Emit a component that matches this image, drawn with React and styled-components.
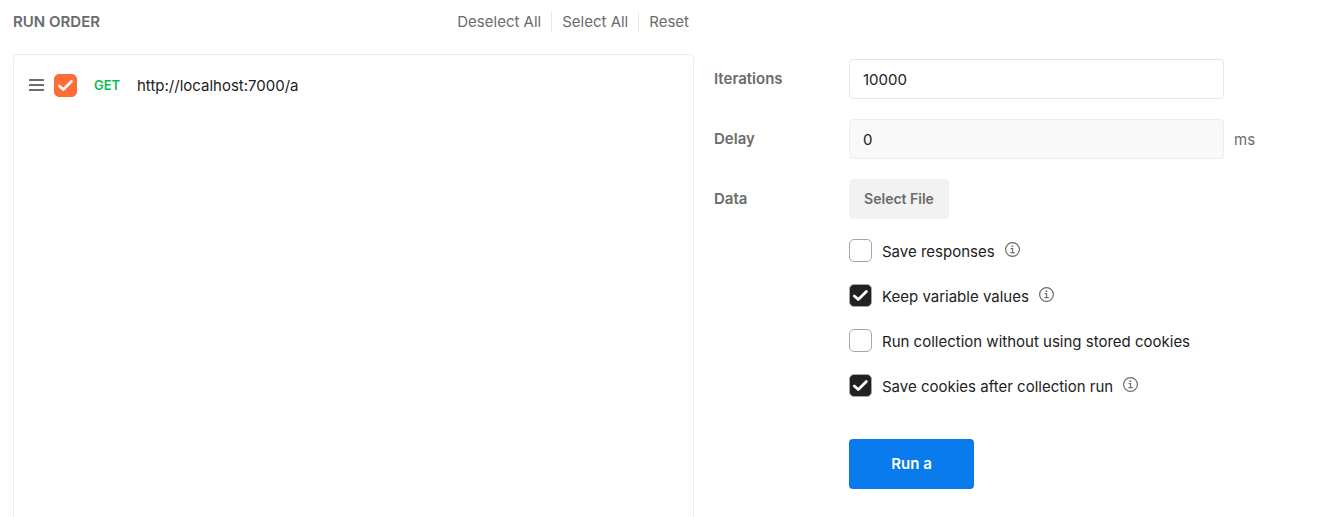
import React, { useState } from "react";
import styled, { createGlobalStyle } from "styled-components";

const GlobalStyle = createGlobalStyle`
  *, *::before, *::after { box-sizing: border-box; }
  body {
    margin: 0;
    background: #fff;
    color: #212121;
    font-family: Inter, "Liberation Sans", sans-serif;
    font-size: 15px;
    line-height: 20px;
  }
  button, input { font: inherit; }
`;

const Page = styled.main`
  display: grid;
  grid-template-columns: minmax(0, 681fr) minmax(0, 612fr);
  column-gap: 20px;
  min-height: 100vh;
  padding-left: 13px;
`;

const OrderColumn = styled.section`
  display: flex;
  flex-direction: column;
`;

const OrderHeader = styled.header`
  display: flex;
  align-items: center;
  justify-content: space-between;
  padding: 12px 5px 22px 0;
`;

const Title = styled.h2`
  margin: 0;
  color: #6b6b6b;
  font-size: 15px;
  font-weight: 600;
`;

const Actions = styled.div`
  display: flex;
`;

const ActionButton = styled.button`
  height: 20px;
  padding: 0 10px;
  border: 0;
  background: none;
  color: #6b6b6b;
  white-space: nowrap;
  cursor: pointer;

  & + & { border-left: 1px solid #e6e6e6; }
  &:last-child { padding-right: 0; }
`;

const RequestList = styled.ul`
  flex: 1;
  margin: 0;
  padding: 19px 15px;
  border: 1px solid #ededed;
  border-bottom: 0;
  border-radius: 4px 4px 0 0;
  list-style: none;
`;

const RequestRow = styled.li`
  display: flex;
  align-items: center;
`;

const DragIcon = styled.svg`
  width: 15px;
  height: 13px;
  margin-right: 10px;
  fill: #6b6b6b;
`;

const Method = styled.span`
  width: 43px;
  margin-left: 17px;
  padding-bottom: 2px;
  color: #0cbb52;
  font-size: 13px;
  font-weight: 600;
`;

const CheckWrap = styled.span`
  display: grid;
  flex: none;
  width: 23px;
  height: 23px;

  > * { grid-area: 1 / 1; }
`;

const CheckInput = styled.input`
  appearance: none;
  width: 23px;
  height: 23px;
  margin: 0;
  border: 1px solid #a6a6a6;
  border-radius: 5px;
  background: #fff;
  cursor: pointer;

  &:checked {
    border-color: ${(p) => (p.$accent ? "#ff6c37" : "#a6a6a6")};
    background: ${(p) => (p.$accent ? "#ff6c37" : "#212121")};
  }
  &:not(:checked) + svg { visibility: hidden; }
`;

const CheckMark = styled.svg`
  width: 23px;
  height: 23px;
  fill: none;
  stroke: #fff;
  stroke-width: 2.8;
  stroke-linecap: round;
  stroke-linejoin: round;
  pointer-events: none;
`;

const Settings = styled.form`
  padding-top: 59px;
`;

const Field = styled.div`
  display: flex;
  align-items: center;
  height: 40px;
  margin-bottom: 20px;
`;

const FieldLabel = styled.label`
  flex: none;
  width: 135px;
  color: #6b6b6b;
  font-weight: 600;
`;

const TextInput = styled.input`
  flex: 0 1 375px;
  min-width: 0;
  height: 40px;
  padding: 1px 13px 0;
  border: 1px solid ${(p) => (p.$muted ? "#ededed" : "#e6e6e6")};
  border-radius: 4px;
  background: ${(p) => (p.$muted ? "#f9f9f9" : "#fff")};
  color: #212121;
`;

const Unit = styled.span`
  margin-left: 10px;
  padding-top: 2px;
  color: #6b6b6b;
`;

const FileButton = styled.button`
  width: 100px;
  height: 40px;
  padding: 0;
  border: 0;
  border-radius: 4px;
  background: #f2f2f2;
  color: #6b6b6b;
  font-size: 14px;
  font-weight: 600;
  cursor: pointer;
`;

const Options = styled.div`
  display: flex;
  flex-direction: column;
  gap: 22px;
  padding-left: 135px;
`;

const Option = styled.div`
  display: flex;
  align-items: center;
  height: 23px;
`;

const OptionLabel = styled.label`
  display: flex;
  align-items: center;
  gap: 10px;
`;

const OptionText = styled.span`
  padding-top: 3px;
`;

const Info = styled.svg`
  width: 15px;
  height: 15px;
  margin: 0 0 2px 10px;
  fill: none;
  stroke: #6b6b6b;
`;

const RunButton = styled.button`
  width: 125px;
  height: 50px;
  margin: 42px 0 28px 135px;
  padding: 0;
  border: 0;
  border-radius: 4px;
  background: #097bed;
  color: #fff;
  font-weight: 600;
  cursor: pointer;
`;

function Checkbox({ accent, ...rest }) {
  return (
    <CheckWrap>
      <CheckInput type="checkbox" $accent={accent} {...rest} />
      <CheckMark viewBox="0 0 23 23" aria-hidden="true">
        <path d="M5.3 12 9.3 15.5 17.4 7.6" />
      </CheckMark>
    </CheckWrap>
  );
}

function InfoIcon() {
  return (
    <Info viewBox="0 0 15 15" aria-hidden="true">
      <circle cx="7.5" cy="7.5" r="6.9" strokeWidth="1.2" />
      <path d="M5.6 6.6H7.6V10.6M5.4 10.6H9.7" strokeWidth="1.1" />
      <circle cx="7.4" cy="4.2" r="0.9" fill="#6b6b6b" stroke="none" />
    </Info>
  );
}

const options = [
  { id: "responses", text: "Save responses", checked: false, info: true },
  { id: "variables", text: "Keep variable values", checked: true, info: true },
  { id: "no-cookies", text: "Run collection without using stored cookies", checked: false, info: false },
  { id: "save-cookies", text: "Save cookies after collection run", checked: true, info: true },
];

export default function App() {
  const [selected, setSelected] = useState(true);

  return (
    <>
      <GlobalStyle />
      <Page>
        <OrderColumn>
          <OrderHeader>
            <Title>RUN ORDER</Title>
            <Actions>
              <ActionButton type="button" onClick={() => setSelected(false)}>Deselect All</ActionButton>
              <ActionButton type="button" onClick={() => setSelected(true)}>Select All</ActionButton>
              <ActionButton type="button" onClick={() => setSelected(true)}>Reset</ActionButton>
            </Actions>
          </OrderHeader>
          <RequestList>
            <RequestRow>
              <DragIcon viewBox="0 0 15 13" aria-hidden="true">
                <rect width="15" height="2" rx="0.5" />
                <rect y="5" width="15" height="2" rx="0.5" />
                <rect y="10" width="15" height="2" rx="0.5" />
              </DragIcon>
              <Checkbox
                accent
                id="request-a"
                aria-labelledby="request-a-url"
                checked={selected}
                onChange={(e) => setSelected(e.target.checked)}
              />
              <Method>GET</Method>
              <label id="request-a-url" htmlFor="request-a">http://localhost:7000/a</label>
            </RequestRow>
          </RequestList>
        </OrderColumn>

        <Settings onSubmit={(e) => e.preventDefault()}>
          <Field>
            <FieldLabel htmlFor="iterations">Iterations</FieldLabel>
            <TextInput id="iterations" type="text" defaultValue="10000" />
          </Field>
          <Field>
            <FieldLabel htmlFor="delay">Delay</FieldLabel>
            <TextInput id="delay" type="text" defaultValue="0" $muted />
            <Unit>ms</Unit>
          </Field>
          <Field>
            <FieldLabel htmlFor="data">Data</FieldLabel>
            <FileButton id="data" type="button">Select File</FileButton>
          </Field>
          <Options>
            {options.map((o) => (
              <Option key={o.id}>
                <OptionLabel htmlFor={o.id}>
                  <Checkbox id={o.id} defaultChecked={o.checked} />
                  <OptionText>{o.text}</OptionText>
                </OptionLabel>
                {o.info && <InfoIcon />}
              </Option>
            ))}
          </Options>
          <RunButton type="submit">Run a</RunButton>
        </Settings>
      </Page>
    </>
  );
}
